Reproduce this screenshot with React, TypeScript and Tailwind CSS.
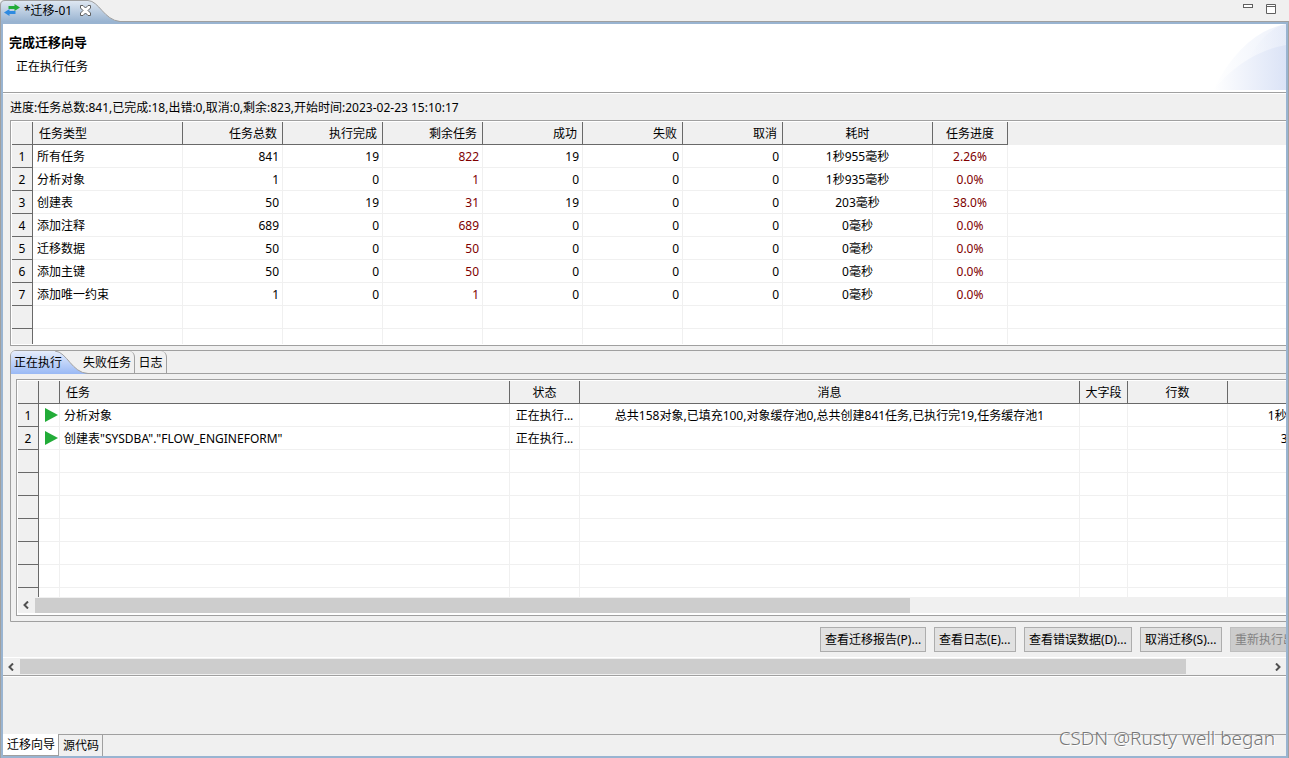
import type { ReactNode } from "react";

type TaskRow = {
  name: string;
  total: string;
  done: string;
  left: string;
  ok: string;
  time: string;
  percent: string;
};

const taskRows: TaskRow[] = [
  { name: "所有任务", total: "841", done: "19", left: "822", ok: "19", time: "1秒955毫秒", percent: "2.26%" },
  { name: "分析对象", total: "1", done: "0", left: "1", ok: "0", time: "1秒935毫秒", percent: "0.0%" },
  { name: "创建表", total: "50", done: "19", left: "31", ok: "19", time: "203毫秒", percent: "38.0%" },
  { name: "添加注释", total: "689", done: "0", left: "689", ok: "0", time: "0毫秒", percent: "0.0%" },
  { name: "迁移数据", total: "50", done: "0", left: "50", ok: "0", time: "0毫秒", percent: "0.0%" },
  { name: "添加主键", total: "50", done: "0", left: "50", ok: "0", time: "0毫秒", percent: "0.0%" },
  { name: "添加唯一约束", total: "1", done: "0", left: "1", ok: "0", time: "0毫秒", percent: "0.0%" },
];

const runningRows = [
  {
    name: "分析对象",
    state: "正在执行...",
    message: "总共158对象,已填充100,对象缓存池0,总共创建841任务,已执行完19,任务缓存池1",
    time: "1秒950毫秒",
  },
  { name: '创建表"SYSDBA"."FLOW_ENGINEFORM"', state: "正在执行...", message: "", time: "31毫秒" },
];

const th = "border-r border-b border-[#696969] bg-[#f0f0f0] px-[5px] pt-[2px] font-normal";
const td = "border-r border-b border-[#f0f0f0] px-[3px] pt-[2px]";
const rowHead = "border-r border-b border-[#696969] bg-[#f0f0f0] pt-[2px] text-center font-normal";

function ArrowLeft() {
  return (
    <svg width="7" height="8" viewBox="0 0 7 8" fill="none" stroke="#505050" strokeWidth="2">
      <path d="M5 0.5 1.5 4 5 7.5" />
    </svg>
  );
}

function ArrowRight() {
  return (
    <svg width="6" height="8" viewBox="0 0 6 8" fill="none" stroke="#505050" strokeWidth="2">
      <path d="M1 0.5 4.5 4 1 7.5" />
    </svg>
  );
}

function EditorTabs() {
  return (
    <div className="flex h-[22px] items-start justify-between rounded-t-md border-b border-[#a0a0a0]">
      <div className="relative h-6 w-[124px]">
        <svg className="absolute top-0 left-0" width="124" height="24" viewBox="0 0 124 24">
          <defs>
            <linearGradient id="editorTab" x1="0" y1="0" x2="0" y2="1">
              <stop offset="0" stopColor="#e2eaf3" />
              <stop offset="0.9" stopColor="#99b4d1" />
            </linearGradient>
          </defs>
          <path d="M0 24V5Q0 0 5 0H88C99 1 104 20 120 21.5H124V24Z" fill="url(#editorTab)" />
          <path d="M0.5 24V5Q0.5 0.5 5 0.5H88C99 1 104 20 120 21.5H124" fill="none" stroke="#a0a0a0" />
        </svg>
        <div className="relative flex h-5 items-center pl-1">
          <svg width="16" height="12" viewBox="0 0 16 12">
            <path d="M4.500 2h6V0L16 3.500 10.500 7V5h-6z" fill="#22ac38" />
            <path d="M11.500 7h-6V5L0 8.500 5.500 12v-2h6z" fill="#2e8ae0" />
          </svg>
          <span className="ml-1 pt-[2px]">*迁移-01</span>
          <button aria-label="关闭" className="ml-2">
            <svg width="11" height="11" viewBox="0 0 11 11">
              <path
                d="M0.500 0.500H3L5.500 3 8 0.500h2.500V3L8 5.500 10.500 8v2.500H8L5.500 8 3 10.500H0.500V8L3 5.500 0.500 3z"
                fill="#fff"
                stroke="#606060"
              />
            </svg>
          </button>
        </div>
      </div>
      <div className="flex items-start gap-3 pt-1 pr-3">
        <button aria-label="最小化">
          <svg width="11" height="10" viewBox="0 0 11 10">
            <rect x="0.5" y="0.5" width="9" height="3" fill="#fff" stroke="#606060" />
          </svg>
        </button>
        <button aria-label="最大化">
          <svg width="11" height="10" viewBox="0 0 11 10">
            <path d="M0.500 0.500h9v9h-9zM0.500 2.500h9" fill="#fff" stroke="#606060" />
          </svg>
        </button>
      </div>
    </div>
  );
}

function WizardHeader() {
  return (
    <header className="flex h-[69px] justify-between border-b border-[#a0a0a0] bg-white">
      <div className="pt-2 pl-[6px]">
        <h1 className="text-[13px] leading-5 font-bold">完成迁移向导</h1>
        <p className="mt-[5px] pl-[7px] leading-5">正在执行任务</p>
      </div>
      <svg width="73" height="66" viewBox="0 0 73 66">
        <defs>
          <linearGradient id="swoosh">
            <stop offset="0" stopColor="#ffffff" />
            <stop offset="1" stopColor="#dbe3f6" />
          </linearGradient>
        </defs>
        <path d="M0 66Q30 8 73 0V66Z" fill="url(#swoosh)" opacity="0.5" />
        <path d="M22 66Q42 8 73 0V66Z" fill="url(#swoosh)" opacity="0.4" />
        <path d="M0 66Q32 28 73 21V66Z" fill="url(#swoosh)" />
      </svg>
    </header>
  );
}

function TaskTable() {
  return (
    <div className="border border-[#a0a0a0] bg-white pt-px pb-px pl-px">
      <table className="w-full table-fixed border-separate border-spacing-0">
        <colgroup>
          <col className="w-[21px]" />
          <col className="w-[150px]" />
          <col className="w-[100px]" />
          <col className="w-[100px]" />
          <col className="w-[100px]" />
          <col className="w-[100px]" />
          <col className="w-[100px]" />
          <col className="w-[100px]" />
          <col className="w-[150px]" />
          <col className="w-[75px]" />
          <col />
        </colgroup>
        <thead>
          <tr className="h-[23px]">
            <th className={th}></th>
            <th className={`${th} pl-[6px] text-left`}>任务类型</th>
            <th className={`${th} text-right`}>任务总数</th>
            <th className={`${th} text-right`}>执行完成</th>
            <th className={`${th} text-right`}>剩余任务</th>
            <th className={`${th} text-right`}>成功</th>
            <th className={`${th} text-right`}>失败</th>
            <th className={`${th} text-right`}>取消</th>
            <th className={`${th} text-center`}>耗时</th>
            <th className={`${th} text-center`}>任务进度</th>
            <th className="border-b border-[#f0f0f0] bg-[#f0f0f0]"></th>
          </tr>
        </thead>
        <tbody>
          {taskRows.map((row, i) => (
            <tr key={row.name} className="h-[23px]">
              <th className={rowHead}>{i + 1}</th>
              <td className={`${td} pl-1`}>{row.name}</td>
              <td className={`${td} text-right`}>{row.total}</td>
              <td className={`${td} text-right`}>{row.done}</td>
              <td className={`${td} text-right text-[#800000]`}>{row.left}</td>
              <td className={`${td} text-right`}>{row.ok}</td>
              <td className={`${td} text-right`}>0</td>
              <td className={`${td} text-right`}>0</td>
              <td className={`${td} text-center`}>{row.time}</td>
              <td className={`${td} text-center text-[#800000]`}>{row.percent}</td>
              <td className="border-b border-[#f0f0f0]"></td>
            </tr>
          ))}
          <tr className="h-[23px]">
            <th className={rowHead}></th>
            {Array.from({ length: 9 }, (_, c) => (
              <td key={c} className={td}></td>
            ))}
            <td className="border-b border-[#f0f0f0]"></td>
          </tr>
          <tr className="h-[15px]">
            <th className="border-r border-[#696969] bg-[#f0f0f0] p-0"></th>
            {Array.from({ length: 9 }, (_, c) => (
              <td key={c} className="border-r border-[#f0f0f0] p-0"></td>
            ))}
            <td></td>
          </tr>
        </tbody>
      </table>
    </div>
  );
}

function RunningTable() {
  return (
    <div className="overflow-hidden">
      <table className="w-full table-fixed border-separate border-spacing-0">
        <colgroup>
          <col className="w-[21px]" />
          <col className="w-[21px]" />
          <col className="w-[450px]" />
          <col className="w-[70px]" />
          <col className="w-[500px]" />
          <col className="w-[48px]" />
          <col className="w-[100px]" />
          <col />
        </colgroup>
        <thead>
          <tr className="h-[23px]">
            <th className={th}></th>
            <th className={th}></th>
            <th className={`${th} pl-[6px] text-left`}>任务</th>
            <th className={th}>状态</th>
            <th className={th}>消息</th>
            <th className={`${th} whitespace-nowrap`}>大字段</th>
            <th className={th}>行数</th>
            <th className={th}></th>
          </tr>
        </thead>
        <tbody>
          {runningRows.map((row, i) => (
            <tr key={row.name} className="h-[23px]">
              <th className={rowHead}>{i + 1}</th>
              <td className="border-r border-b border-[#f0f0f0] p-0">
                <svg className="ml-[6px]" width="13" height="14" viewBox="0 0 13 14">
                  <path d="M0 0 13 7 0 14z" fill="#22ac38" />
                </svg>
              </td>
              <td className={`${td} pl-1`}>{row.name}</td>
              <td className={`${td} text-center whitespace-nowrap`}>{row.state}</td>
              <td className={`${td} text-center whitespace-nowrap`}>{row.message}</td>
              <td className={td}></td>
              <td className={td}></td>
              <td className={`${td} text-center`}>{row.time}</td>
            </tr>
          ))}
          {Array.from({ length: 6 }, (_, r) => (
            <tr key={r} className="h-[23px]">
              <th className={rowHead}></th>
              {Array.from({ length: 7 }, (_, c) => (
                <td key={c} className={td}></td>
              ))}
            </tr>
          ))}
          <tr className="h-[9px]">
            <th className="border-r border-[#696969] bg-[#f0f0f0] p-0"></th>
            {Array.from({ length: 7 }, (_, c) => (
              <td key={c} className="border-r border-[#f0f0f0] p-0"></td>
            ))}
          </tr>
        </tbody>
      </table>
    </div>
  );
}

function FolderTabs() {
  return (
    <div className="flex h-[23px] rounded-tl-md border-b border-[#a0a0a0]">
      <button className="relative h-[22px] w-[70px] pt-[2px] pl-[3px] text-left">
        <svg className="absolute top-0 left-0" width="80" height="23" viewBox="0 0 80 23">
          <defs>
            <linearGradient id="folderTab" x1="0" y1="0" x2="0" y2="1">
              <stop offset="0" stopColor="#e6edfc" />
              <stop offset="1" stopColor="#99b9f5" />
            </linearGradient>
          </defs>
          <path d="M0 23V5Q0 0 5 0H44C56 1 61 22 77 22.5V23Z" fill="url(#folderTab)" />
          <path d="M44 0C56 1 61 22 77 22.5" fill="none" stroke="#a0a0a0" />
        </svg>
        <span className="relative">正在执行</span>
      </button>
      <button className="h-[22px] w-[54px] rounded-tr-md border-r border-[#a0a0a0] pt-[2px] pl-[2px] text-left">
        失败任务
      </button>
      <button className="h-[22px] w-8 rounded-tr-md border-r border-[#a0a0a0] pt-[2px] text-center">日志</button>
    </div>
  );
}

function ActionButton({ children, className, disabled }: { children: ReactNode; className: string; disabled?: boolean }) {
  return (
    <button
      disabled={disabled}
      className={`h-[25px] border border-[#adadad] bg-[#e1e1e1] pl-1 text-left whitespace-nowrap disabled:border-[#bfbfbf] disabled:bg-[#cccccc] disabled:text-[#838383] ${className}`}
    >
      {children}
    </button>
  );
}

export default function App() {
  return (
    <div className="relative flex min-h-screen flex-col overflow-hidden bg-[#f0f0f0] font-['Noto_Sans','Noto_Sans_CJK_SC',sans-serif] text-xs leading-4 text-black">
      <EditorTabs />
      <div className="flex flex-1 flex-col border-x border-[#a0a0a0]">
        <div className="flex flex-1 flex-col border-2 border-[#99b4d1]">
          <WizardHeader />
          <main className="overflow-hidden border-t border-white">
            <div className="min-w-[1376px] pl-[7px]">
              <p className="pt-[6px] pb-1">
                进度:任务总数:841,已完成:18,出错:0,取消:0,剩余:823,开始时间:2023-02-23 15:10:17
              </p>
              <TaskTable />
              <section className="mt-1 rounded-tl-md border border-[#a0a0a0]">
                <FolderTabs />
                <div className="p-[5px]">
                  <div className="border border-[#a0a0a0] bg-white pt-px pl-px">
                    <RunningTable />
                    <div className="mb-[2px] flex h-4 items-center bg-[#f0f0f0]">
                      <button aria-label="向左滚动" className="flex w-[17px] justify-center">
                        <ArrowLeft />
                      </button>
                      <div className="h-[15px] w-[875px] bg-[#cdcdcd]"></div>
                    </div>
                  </div>
                </div>
              </section>
              <div className="flex justify-end gap-2 py-[5px] pr-[14px]">
                <ActionButton className="w-[106px]">查看迁移报告(P)...</ActionButton>
                <ActionButton className="w-[82px]">查看日志(E)...</ActionButton>
                <ActionButton className="w-[108px]">查看错误数据(D)...</ActionButton>
                <ActionButton className="w-[82px]">取消迁移(S)...</ActionButton>
                <ActionButton className="w-[135px]" disabled>
                  重新执行出错任务(R)...
                </ActionButton>
              </div>
            </div>
            <div className="flex h-[19px] items-center border-y border-t-white border-b-[#a0a0a0]">
              <button aria-label="向左滚动" className="flex w-[17px] justify-center">
                <ArrowLeft />
              </button>
              <div className="flex-1">
                <div className="h-[15px] w-14/15 bg-[#cdcdcd]"></div>
              </div>
              <button aria-label="向右滚动" className="flex w-[17px] justify-center">
                <ArrowRight />
              </button>
            </div>
          </main>
          <div className="flex-1 border-t border-white"></div>
          <nav className="flex h-[22px]">
            <button className="w-14 border-r border-b border-[#a0a0a0] bg-white pl-px text-center">迁移向导</button>
            <button className="w-11 border-t border-r border-[#a0a0a0] pl-px text-center">源代码</button>
            <div className="flex-1 border-t border-[#a0a0a0]"></div>
          </nav>
        </div>
      </div>
      <div className="absolute right-[14px] bottom-[6px] text-[19px] leading-7 font-light text-[#777777] [text-shadow:1px_1px_0_#fff]">
        CSDN @Rusty well began
      </div>
    </div>
  );
}
